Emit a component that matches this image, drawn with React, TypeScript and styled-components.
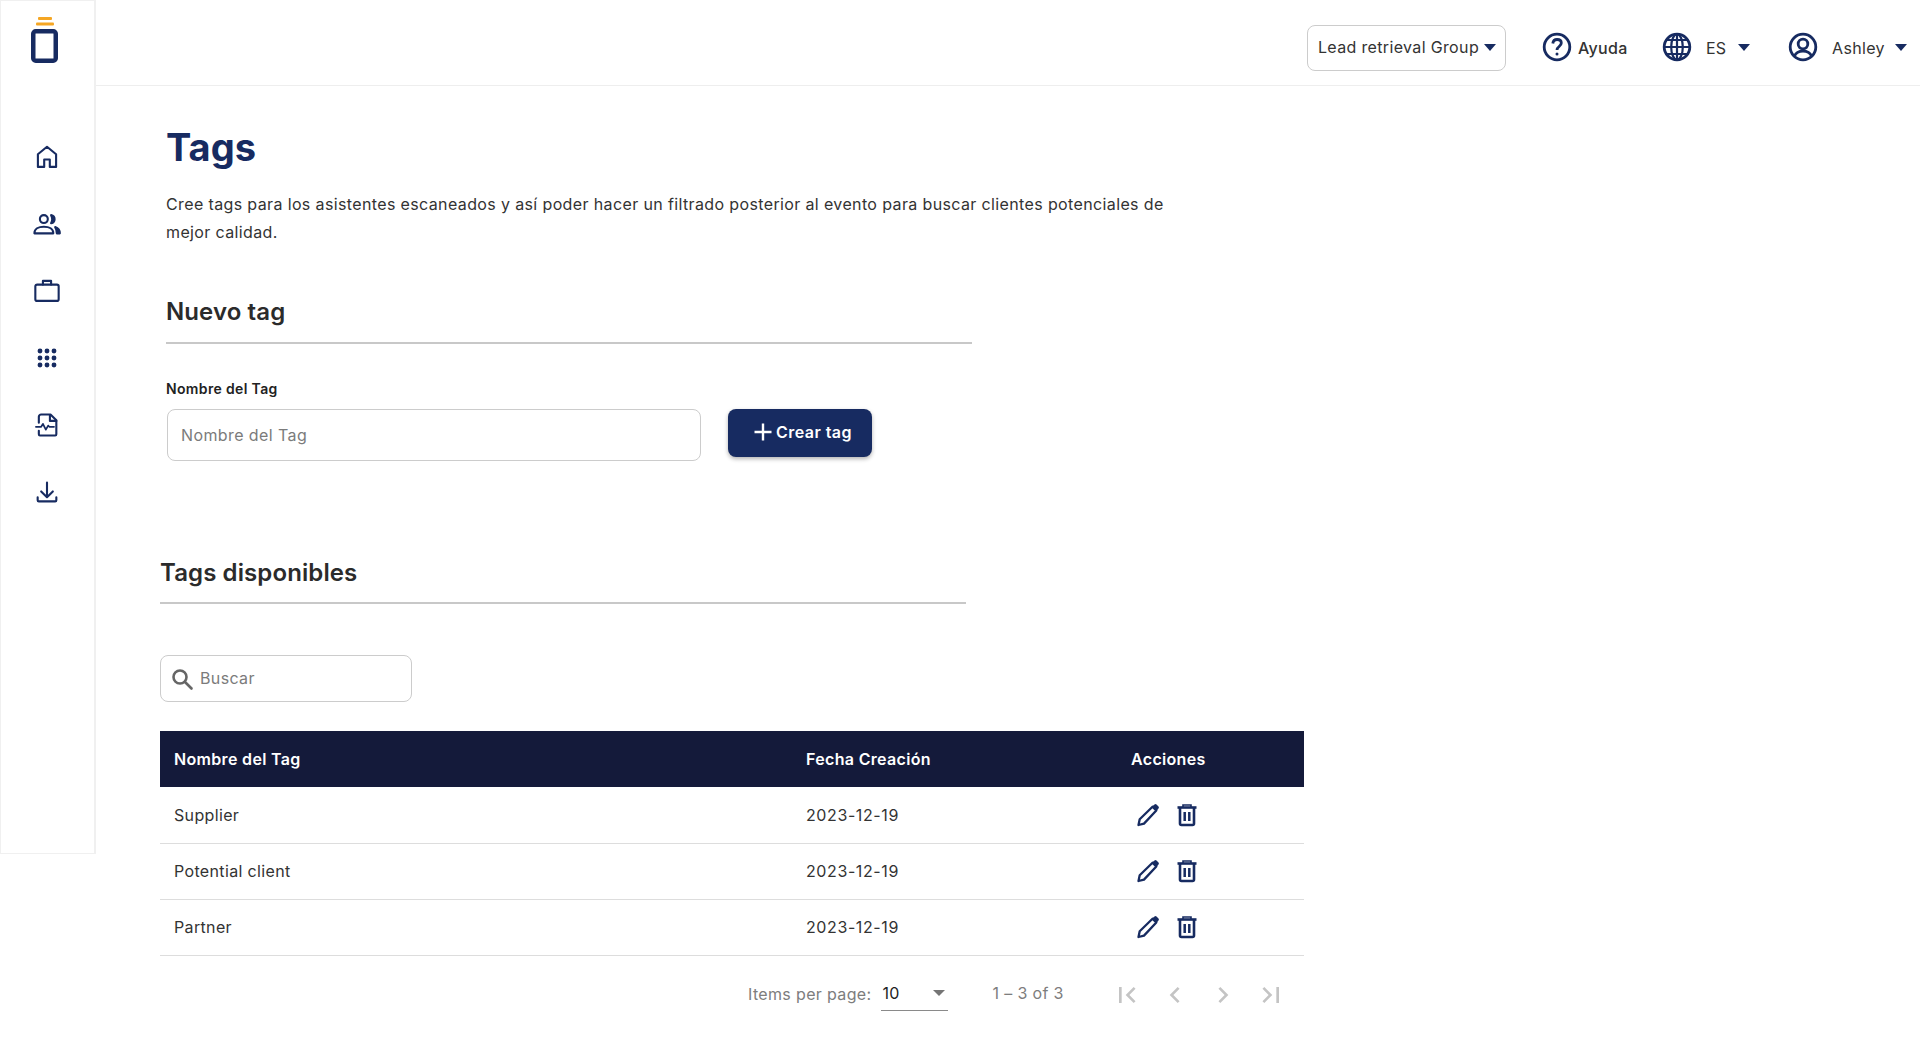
import React from "react";
import styled, { createGlobalStyle } from "styled-components";

const navy = "#172b61";

const Global = createGlobalStyle`
  html, body { margin: 0; padding: 0; background: #fff; }
  body { font-family: Inter, "Liberation Sans", sans-serif; color: #212529; letter-spacing: 0.35px; }
  * { box-sizing: border-box; }
  input::placeholder { color: #7b7b7b; opacity: 1; }
`;

const Page = styled.div`
  display: flex;
  width: 1920px;
  height: 1058px;
  overflow: hidden;
  align-items: flex-start;
`;
const Sidebar = styled.aside`
  flex: 0 0 96px;
  height: 854px;
  border: 1px solid #f0f0f0;
  border-right-width: 2px;
  display: flex;
  flex-direction: column;
  align-items: center;
`;
const LogoWrap = styled.div`
  height: 46px;
  margin: 16px 0 80px -7px;
`;
const NavList = styled.nav`
  display: flex;
  flex-direction: column;
  gap: 39px;
  align-items: center;
`;
const NavIcon = styled.svg`
  width: 28px;
  height: 28px;
  display: block;
  fill: none;
  stroke: ${navy};
  stroke-width: 1.8;
  stroke-linecap: round;
  stroke-linejoin: round;
  margin-left: -1px;
`;
const Column = styled.div`
  flex: 1;
  display: flex;
  flex-direction: column;
`;
const Topbar = styled.header`
  height: 86px;
  border-bottom: 1px solid #eeeeee;
  display: flex;
  align-items: center;
  justify-content: flex-end;
  padding-right: 10px;
  padding-top: 9px;
`;
const GroupSelect = styled.div`
  width: 199px;
  height: 46px;
  margin-right: 36px;
  margin-top: 2px;
  border: 1px solid #cccccc;
  border-radius: 8px;
  display: flex;
  align-items: center;
  padding: 0 10px 2px;
  gap: 5px;
  font-size: 16px;
  color: #333;
  white-space: nowrap;
`;
const Caret = styled.span`
  width: 0;
  height: 0;
  flex-shrink: 0;
  border-left: 6.5px solid transparent;
  border-right: 6.5px solid transparent;
  border-top: 7px solid ${navy};
`;
const TopItem = styled.div<{ $w: number; $gap: number }>`
  width: ${(p) => p.$w}px;
  display: flex;
  align-items: center;
  gap: ${(p) => p.$gap}px;
  font-size: 16px;
  color: #333;
  svg { flex-shrink: 0; }
`;
const TopLabel = styled.span<{ $trim: number; $weight?: number }>`
  margin-right: -${(p) => p.$trim}px;
  padding-top: 2px;
  font-weight: ${(p) => p.$weight ?? 400};
`;
const Main = styled.main`
  padding: 36px 0 0 70px;
  display: flex;
  flex-direction: column;
  align-items: flex-start;
`;
const Title = styled.h1`
  margin: 0;
  font-size: 38px;
  line-height: 50px;
  font-weight: 700;
  letter-spacing: 0;
  color: ${navy};
`;
const Description = styled.p`
  margin: 18px 0 0;
  width: 1030px;
  font-size: 16px;
  line-height: 28px;
  letter-spacing: 0.37px;
  color: #333;
`;
const SectionHead = styled.div<{ $offset: number; $top: number; $h: number }>`
  width: 806px;
  margin-left: ${(p) => p.$offset}px;
  margin-top: ${(p) => p.$top}px;
  border-bottom: 2px solid #c8c8c8;
  height: ${(p) => p.$h}px;
  font-size: 24px;
  line-height: 36px;
  font-weight: 600;
  letter-spacing: 0.1px;
  color: #2b2b2b;
`;
const FieldLabel = styled.label`
  margin-top: 35px;
  font-size: 14px;
  line-height: 20px;
  font-weight: 600;
  color: #222;
`;
const FormRow = styled.div`
  display: flex;
  align-items: flex-start;
  gap: 27px;
  margin-top: 10px;
  margin-left: 1px;
`;
const TextInput = styled.input`
  width: 534px;
  height: 52px;
  border: 1px solid #cccccc;
  border-radius: 8px;
  padding: 0 13px;
  font: 400 16px Inter, sans-serif;
  letter-spacing: 0.4px;
  outline: none;
`;
const PrimaryButton = styled.button`
  width: 144px;
  height: 48px;
  border: 0;
  border-radius: 8px;
  background: ${navy};
  color: #fff;
  font: 600 16px Inter, sans-serif;
  letter-spacing: 0.45px;
  display: flex;
  align-items: center;
  justify-content: center;
  gap: 2px;
  padding: 0 0 2px 4px;
  box-shadow: 0 2px 4px rgba(0, 0, 0, 0.3);
`;
const SearchBox = styled.div`
  width: 252px;
  height: 47px;
  margin: 51px 0 0 -6px;
  border: 1px solid #cccccc;
  border-radius: 8px;
  display: flex;
  align-items: center;
  gap: 6px;
  padding: 0 9px;
`;
const SearchInput = styled.input`
  border: 0;
  outline: none;
  width: 190px;
  padding: 0 0 2px;
  font: 400 16px Inter, sans-serif;
  letter-spacing: 0.35px;
`;
const Table = styled.table`
  width: 1144px;
  margin: 29px 0 0 -6px;
  border-collapse: collapse;
  table-layout: fixed;
`;
const HeadCell = styled.th<{ $w: number }>`
  width: ${(p) => p.$w}px;
  height: 56px;
  background: #141a3a;
  color: #fff;
  text-align: left;
  padding: 0 0 0 14px;
  font-size: 16px;
  font-weight: 600;
  letter-spacing: 0.33px;
`;
const Cell = styled.td`
  height: 56px;
  padding: 0 0 0 14px;
  border-bottom: 1px solid #dddddd;
  font-size: 16px;
  color: #333;
`;
const DateCell = styled(Cell)`
  letter-spacing: 0.6px;
`;
const Actions = styled.div`
  display: flex;
  align-items: center;
  gap: 13px;
  padding-left: 4px;
`;
const ActionIcon = styled.svg`
  width: 26px;
  height: 26px;
  display: block;
`;
const Paginator = styled.div`
  width: 1144px;
  margin: 18px 0 0 -6px;
  height: 40px;
  display: flex;
  align-items: center;
  font-size: 16px;
  color: #7d7d7d;
`;
const PerPage = styled.span`
  margin-left: 588px;
`;
const PageSelect = styled.div`
  width: 67px;
  height: 33px;
  margin: 2px 0 0 10px;
  border-bottom: 1px solid #8a8a8a;
  display: flex;
  align-items: center;
  justify-content: space-between;
  padding: 0 2px 2px 1px;
  color: #222;
`;
const GreyCaret = styled.span`
  width: 0;
  height: 0;
  margin-right: 1px;
  border-left: 6px solid transparent;
  border-right: 6px solid transparent;
  border-top: 6px solid #757575;
`;
const Range = styled.span`
  margin-left: 44px;
  margin-top: -2px;
`;
const PagerButtons = styled.div`
  margin-left: 47px;
  display: flex;
  gap: 16px;
  margin-top: 2px;
`;
const PagerIcon = styled.svg`
  width: 32px;
  height: 32px;
  display: block;
  fill: #c4c4c4;
`;

const navPaths: React.ReactNode[] = [
  <path key="h" d="M12 3.200 4.200 9.600V20.500h5.400v-6.300h4.800v6.300h5.400V9.600z" />,
  <g key="p">
    <circle cx="9.300" cy="7.800" r="3.400" />
    <path d="M1.200 20c0-3.600 3.400-5.600 8.100-5.600s8.100 2 8.100 5.600z" />
    <path d="M15.500 4.400c2 .4 3 1.800 3 3.500s-1 3-3 3.500c1.100-2 1.100-5 0-7z" fill={navy} />
    <path d="M19 14.600c2.500.9 4 2.800 4 5.400h-2.600c0-2-.300-3.800-1.400-5.400z" fill={navy} />
  </g>,
  <g key="b">
    <rect x="2" y="6.500" width="20" height="14" rx="1.500" />
    <path d="M8.500 6.500V3.300h7V6.500" />
  </g>,
  <g key="g" fill={navy} stroke="none">
    {[6, 12, 18].flatMap((y) =>
      [6, 12, 18].map((x) => <circle key={`${x}-${y}`} cx={x} cy={y} r="2.100" />)
    )}
  </g>,
  <g key="f">
    <path d="M5 10V5a2 2 0 0 1 2-2h8l5 5v12a1 1 0 0 1-1 1H6a1 1 0 0 1-1-1v-3" />
    <path d="M14.500 3.500V8.500H20" />
    <path d="M2.500 13.500h4.500l1.500-2.500 2.500 5 2-3.500 1 1h4" strokeWidth="1.500" />
  </g>,
  <g key="d">
    <path d="M12 4v12M7 11.500l5 5 5-5" />
    <path d="M4 16.500v2.500a1 1 0 0 0 1 1h14a1 1 0 0 0 1-1v-2.500" />
  </g>,
];

const Pencil = () => (
  <ActionIcon viewBox="0 0 26 26">
    <path d="M3.500 23 4.700 17.200 17.500 4.700l3.800 3.800L9 21.600z" fill="none" stroke={navy} strokeWidth="2.300" strokeLinejoin="round" />
    <path d="M17 4.500 19.500 2.500a1.500 1.500 0 0 1 2 0l2 2a1.500 1.500 0 0 1 0 2L21.500 9z" fill={navy} />
  </ActionIcon>
);
const Trash = () => (
  <ActionIcon viewBox="0 0 26 26">
    <path d="M3.500 5.500h19" stroke={navy} strokeWidth="2.600" fill="none" />
    <path d="M9 5V3h8v2" stroke={navy} strokeWidth="1.600" fill="none" />
    <path d="M6 6v15.500a1.500 1.500 0 0 0 1.500 1.500h11a1.500 1.500 0 0 0 1.500-1.500V6" stroke={navy} strokeWidth="2.600" fill="none" />
    <path d="M10.700 10v9M15.300 10v9" stroke={navy} strokeWidth="2.500" fill="none" />
  </ActionIcon>
);

const topIconProps = { width: 30, height: 30, viewBox: "0 0 30 30", fill: "none", stroke: navy, strokeWidth: 2.800 };

const rows = ["Supplier", "Potential client", "Partner"];

export default function App() {
  return (
    <Page>
      <Global />
      <Sidebar>
        <LogoWrap>
          <svg width="27" height="46" viewBox="0 0 27 46" style={{ display: "block" }}>
            <rect x="7" y="0" width="14" height="3" rx="1" fill="#f5a623" />
            <rect x="5" y="5.500" width="18" height="3" rx="1" fill="#f5a623" />
            <rect x="2.250" y="14.250" width="22.500" height="29.500" rx="2.500" fill="none" stroke={navy} strokeWidth="4.500" />
          </svg>
        </LogoWrap>
        <NavList>
          {navPaths.map((p, i) => (
            <NavIcon key={i} viewBox="0 0 24 24">{p}</NavIcon>
          ))}
        </NavList>
      </Sidebar>
      <Column>
        <Topbar>
          <GroupSelect>Lead retrieval Group <Caret /></GroupSelect>
          <TopItem $w={120} $gap={6}>
            <svg {...topIconProps}>
              <circle cx="15" cy="15" r="12.800" />
              <path d="M10.800 11.500c.3-2.600 2-4 4.300-4 2.500 0 4.200 1.500 4.200 3.600 0 3.400-4.300 3.400-4.300 6.800" />
              <circle cx="15" cy="22" r="1.500" fill={navy} stroke="none" />
            </svg>
            <TopLabel $trim={0} $weight={500}>Ayuda</TopLabel>
          </TopItem>
          <TopItem $w={125.600} $gap={14}>
            <svg {...topIconProps}>
              <circle cx="15" cy="15" r="12.800" />
              <ellipse cx="15" cy="15" rx="5.800" ry="12.800" strokeWidth="2.200" />
              <path d="M15 2v26M2.500 15h25M4.500 8h21M4.500 22h21" strokeWidth="2.200" />
            </svg>
            <TopLabel $trim={3}>ES</TopLabel>
            <Caret />
          </TopItem>
          <TopItem $w={122.500} $gap={14.500}>
            <svg {...topIconProps}>
              <circle cx="15" cy="15" r="12.800" />
              <circle cx="15" cy="12" r="4.800" />
              <path d="M6.500 24c1.500-3.500 4.800-4.800 8.500-4.800s7 1.300 8.500 4.800" />
            </svg>
            <TopLabel $trim={4}>Ashley</TopLabel>
            <Caret />
          </TopItem>
        </Topbar>
        <Main>
          <Title>Tags</Title>
          <Description>
            Cree tags para los asistentes escaneados y así poder hacer un filtrado posterior al evento para buscar clientes potenciales de mejor calidad.
          </Description>
          <SectionHead $offset={0} $top={48} $h={50}>Nuevo tag</SectionHead>
          <FieldLabel>Nombre del Tag</FieldLabel>
          <FormRow>
            <TextInput placeholder="Nombre del Tag" />
            <PrimaryButton>
              <svg width="22" height="22" viewBox="0 0 22 22">
                <path d="M11 2.500v17M2.500 11h17" stroke="#fff" strokeWidth="2.400" />
              </svg>
              Crear tag
            </PrimaryButton>
          </FormRow>
          <SectionHead $offset={-6} $top={94} $h={49}>Tags disponibles</SectionHead>
          <SearchBox>
            <svg width="24" height="24" viewBox="0 0 24 24" fill="none" stroke="#666" strokeWidth="2.600">
              <circle cx="10" cy="10" r="6.500" />
              <path d="M15 15l6.500 6.500" strokeLinecap="round" />
            </svg>
            <SearchInput placeholder="Buscar" />
          </SearchBox>
          <Table>
            <thead>
              <tr>
                <HeadCell $w={632}>Nombre del Tag</HeadCell>
                <HeadCell $w={325}>Fecha Creación</HeadCell>
                <HeadCell $w={187}>Acciones</HeadCell>
              </tr>
            </thead>
            <tbody>
              {rows.map((r) => (
                <tr key={r}>
                  <Cell>{r}</Cell>
                  <DateCell>2023-12-19</DateCell>
                  <Cell>
                    <Actions><Pencil /><Trash /></Actions>
                  </Cell>
                </tr>
              ))}
            </tbody>
          </Table>
          <Paginator>
            <PerPage>Items per page:</PerPage>
            <PageSelect>10 <GreyCaret /></PageSelect>
            <Range>1 – 3 of 3</Range>
            <PagerButtons>
              <PagerIcon viewBox="0 0 24 24"><path d="M18.400 16.600 13.800 12l4.600-4.600L17 6l-6 6 6 6zM6 6h2v12H6z" /></PagerIcon>
              <PagerIcon viewBox="0 0 24 24"><path d="M15.400 7.400 14 6l-6 6 6 6 1.400-1.400-4.600-4.600z" /></PagerIcon>
              <PagerIcon viewBox="0 0 24 24"><path d="M10 6 8.600 7.400l4.600 4.600-4.600 4.600L10 18l6-6z" /></PagerIcon>
              <PagerIcon viewBox="0 0 24 24"><path d="M5.600 7.400 10.200 12l-4.600 4.600L7 18l6-6-6-6zM16 6h2v12h-2z" /></PagerIcon>
            </PagerButtons>
          </Paginator>
        </Main>
      </Column>
    </Page>
  );
}
